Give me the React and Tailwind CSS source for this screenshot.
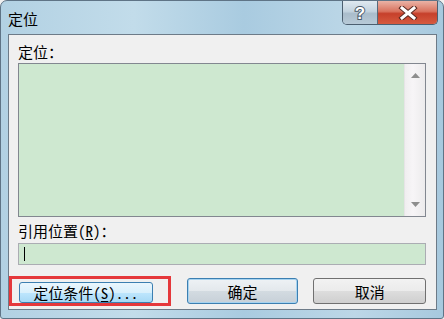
import React from 'react';

const FONT = "font-['Noto_Sans_Mono_CJK_SC','Noto_Sans_CJK_SC',sans-serif]";

const CaptionButtons = () => (
  <div className="ml-auto mr-[5px] flex h-[24px] self-start rounded-b-[5px] border border-t-0 border-[#4c5f70] overflow-hidden">
    <div className="w-[35px] flex items-center justify-center bg-[linear-gradient(#dfe9f0,#c3d3df_45%,#a9bccb_55%,#b8cad7)] border-r border-[#56697a]">
      <svg width="16" height="18" viewBox="0 0 16 18">
        <text x="8" y="15" textAnchor="middle" fontSize="17" fontWeight="700" fontFamily="Liberation Sans, sans-serif" fill="#ffffff" stroke="#4a5a6a" strokeWidth="2" paintOrder="stroke">?</text>
      </svg>
    </div>
    <div className="w-[59px] flex items-center justify-center bg-[linear-gradient(#eab3a6,#d9735f_45%,#c6402b_55%,#d65a3f)]">
      <svg width="20" height="14" viewBox="0 0 20 14">
        <path d="M4 2 L16 12 M16 2 L4 12" stroke="#5a2a22" strokeWidth="5" strokeLinecap="square" />
        <path d="M4 2 L16 12 M16 2 L4 12" stroke="#ffffff" strokeWidth="3" strokeLinecap="square" />
      </svg>
    </div>
  </div>
);

const ScrollTrack = () => (
  <div className="w-[21px] h-full flex flex-col items-center justify-between py-[9px] bg-[linear-gradient(90deg,#f0eef0,#f7f5f7_40%,#ecebec)] border-l border-[#e6e4e6]">
    <svg width="9" height="5" viewBox="0 0 9 5"><path d="M0 5 L4.5 0 L9 5 Z" fill="#8e8e8e" /></svg>
    <svg width="9" height="5" viewBox="0 0 9 5"><path d="M0 0 L4.5 5 L9 0 Z" fill="#8e8e8e" /></svg>
  </div>
);

const Button = ({ children, kind = 'normal', className = '' }) => {
  const styles = {
    normal: 'border-[#707070] bg-[linear-gradient(#f2f2f2,#ebebeb_50%,#dddddd_50%,#cfcfcf)]',
    default: 'border-[#3c7fb1] bg-[linear-gradient(#eef2f5,#e3e8ec_50%,#d3dbe1_50%,#c7d0d8)] shadow-[inset_0_0_0_1px_#a6d3f0]',
    hover: 'border-[#3c7fb1] bg-[linear-gradient(#eaf6fd,#d9f0fc_50%,#bee6fd_50%,#a7d9f5)]',
  };
  return (
    <div className={`flex items-center justify-center rounded-[3px] border text-[15px] leading-none text-black ${styles[kind]} ${className}`}>
      {children}
    </div>
  );
};

export default function App() {
  return (
    <div className={`relative w-[444px] h-[319px] overflow-hidden bg-[#f0f0f0] ${FONT}`}>
      <div className="h-full flex flex-col rounded-t-[7px] rounded-b-[3px] border border-[#5f7486] bg-[linear-gradient(90deg,#b2d1e3,#c2dcea_30%,#a9cbe0_55%,#bcd7e7_80%,#a7c9de)]">
        {/* title bar */}
        <div className="h-[33px] flex">
          <span className="pl-[7px] pt-[9px] text-[15px] leading-[17px] text-black">定位</span>
          <CaptionButtons />
        </div>

        {/* client area */}
        <div className="ml-[7px] mr-[6px] h-[276px] border border-[#6d7b88] bg-[#f0f0f0] pl-[9px] pr-[10px] flex flex-col">
          <div className="mt-[8px] h-[19px] text-[15px] leading-[17px] text-black">定位：</div>
          <div className="mt-[1px] h-[154px] border border-[#828790] bg-[#cee8d0] flex justify-end">
            <ScrollTrack />
          </div>
          <div className="mt-[5px] h-[19px] text-[15px] leading-[17px] text-black">
            引用位置(<span className="underline underline-offset-2">R</span>)：
          </div>
          <div className="mt-[2px] h-[22px] border border-[#abadb3] bg-[#cee8d0] flex items-center pl-[5px]">
            <div className="w-px h-[14px] bg-black" />
          </div>
          <div className="mt-[13px] flex items-start">
            <Button kind="hover" className="ml-[1px] mt-[4px] w-[134px] h-[21px]">
              定位条件(<span className="underline underline-offset-2">S</span>)...
            </Button>
            <Button kind="default" className="ml-[34px] w-[112px] h-[26px]">确定</Button>
            <Button className="ml-[15px] w-[113px] h-[26px]">取消</Button>
          </div>
        </div>
      </div>

      {/* annotation */}
      <div className="absolute left-[9px] top-[276px] w-[162px] h-[30px] border-[3px] border-[#e5383b]" />
    </div>
  );
}
